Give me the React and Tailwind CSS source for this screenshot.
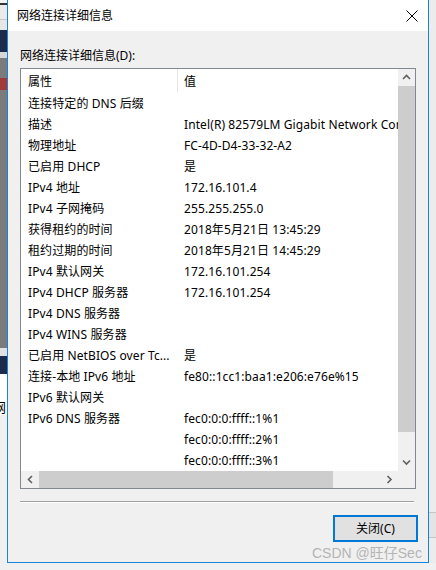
import React from "react";

const rows = [
  ["连接特定的 DNS 后缀", ""],
  ["描述", "Intel(R) 82579LM Gigabit Network Connection"],
  ["物理地址", "FC-4D-D4-33-32-A2"],
  ["已启用 DHCP", "是"],
  ["IPv4 地址", "172.16.101.4"],
  ["IPv4 子网掩码", "255.255.255.0"],
  ["获得租约的时间", "2018年5月21日 13:45:29"],
  ["租约过期的时间", "2018年5月21日 14:45:29"],
  ["IPv4 默认网关", "172.16.101.254"],
  ["IPv4 DHCP 服务器", "172.16.101.254"],
  ["IPv4 DNS 服务器", ""],
  ["IPv4 WINS 服务器", ""],
  ["已启用 NetBIOS over Tc...", "是"],
  ["连接-本地 IPv6 地址", "fe80::1cc1:baa1:e206:e76e%15"],
  ["IPv6 默认网关", ""],
  ["IPv6 DNS 服务器", "fec0:0:0:ffff::1%1"],
  ["", "fec0:0:0:ffff::2%1"],
  ["", "fec0:0:0:ffff::3%1"],
];

const font = { fontFamily: '"Noto Sans", "Noto Sans CJK SC", sans-serif' };

function Chevron({ dir }) {
  const pts = {
    up: "1,5 4.5,1.5 8,5",
    down: "1,1.5 4.5,5 8,1.5",
    left: "5,1 1.5,4.5 5,8",
    right: "1.5,1 5,4.5 1.5,8",
  }[dir];
  const vb = dir === "up" || dir === "down" ? "0 0 9 7" : "0 0 7 9";
  const w = dir === "up" || dir === "down" ? 9 : 7;
  const h = dir === "up" || dir === "down" ? 7 : 9;
  return (
    <svg width={w} height={h} viewBox={vb}>
      <polyline points={pts} fill="none" stroke="#606060" strokeWidth="1.6" />
    </svg>
  );
}

export default function App() {
  return (
    <div
      className="w-[436px] h-[570px] bg-[#f0f0f0] relative overflow-hidden text-[12px] text-black"
      style={font}
    >
      <div className="flex h-[563px]">
        {/* left background strip */}
        <div className="w-[7px] flex flex-col shrink-0">
          <div className="h-[3px] bg-[#f4f4f4]" />
          <div className="h-[2px] bg-[#333]" />
          <div className="h-[14px] bg-[#eaeaea]" />
          <div className="h-px bg-[#c8c8c8]" />
          <div className="h-[10px] bg-[#e6e6e6]" />
          <div className="h-[22px] bg-[#1d2b4d]" />
          <div className="h-[6px] bg-[#d6d6d6]" />
          <div className="h-[20px] bg-[#7b7b7b]" />
          <div className="h-[12px] bg-[#a33a3a]" />
          <div className="h-[258px] bg-[#7b7b7b]" />
          <div className="h-[8px] bg-[#e2e2e2]" />
          <div className="h-[18px] bg-[#1d2b4d]" />
          <div className="h-[25px] bg-white" />
          <div className="h-[16px] bg-white overflow-hidden leading-[16px] text-[13px]" style={{ fontFamily: '"Noto Sans CJK SC", sans-serif' }}>
            <span className="relative -left-[7px]">网</span>
          </div>
          <div className="flex-1 bg-[#f0f0f0]" />
        </div>

        {/* dialog */}
        <div className="w-[422px] shrink-0 border-x border-b border-[#1883d7] flex flex-col bg-[#f0f0f0]">
          <div className="h-[31px] bg-white flex items-center justify-between pl-[9px] pr-[9px]">
            <span>网络连接详细信息</span>
            <svg width="12" height="12" viewBox="0 0 12 12" className="mr-px">
              <line x1="0.5" y1="0.5" x2="11.5" y2="11.5" stroke="#000" strokeWidth="1" />
              <line x1="11.5" y1="0.5" x2="0.5" y2="11.5" stroke="#000" strokeWidth="1" />
            </svg>
          </div>

          <div className="flex flex-col pl-[12px] pt-[16px]">
            <div className="leading-[16px] h-[16px] pt-px">网络连接详细信息(D):</div>

            <div className="mt-[5px] w-[396px] h-[421px] border border-[#828790] bg-white flex flex-col">
              <div className="flex h-[402px]">
                <div className="w-[377px] overflow-hidden flex flex-col tracking-[0.1px]">
                  <div className="h-[23px] flex shrink-0">
                    <div className="w-[156px] pl-[7px] pt-[2px] flex items-center">属性</div>
                    <div className="w-px bg-[#e5e5e5]" />
                    <div className="pl-[6px] pt-[2px] flex items-center">值</div>
                  </div>
                  {rows.map(([k, v], i) => (
                    <div key={i} className="h-[21px] pt-[2px] flex items-center shrink-0 whitespace-nowrap">
                      <div className="w-[157px] pl-[7px] shrink-0">{k}</div>
                      <div className="pl-[6px]">{v}</div>
                    </div>
                  ))}
                </div>
                <div className="w-[17px] bg-[#f0f0f0] flex flex-col">
                  <div className="h-[17px] flex items-center justify-center">
                    <Chevron dir="up" />
                  </div>
                  <div className="h-[346px] bg-[#cdcdcd]" />
                  <div className="flex-1" />
                  <div className="h-[17px] flex items-center justify-center">
                    <Chevron dir="down" />
                  </div>
                </div>
              </div>
              <div className="flex h-[17px]">
                <div className="w-[377px] bg-[#f0f0f0] flex">
                  <div className="w-[18px] flex items-center justify-center">
                    <Chevron dir="left" />
                  </div>
                  <div className="w-[294px] bg-[#cdcdcd]" />
                  <div className="flex-1" />
                  <div className="w-[17px] flex items-center justify-center">
                    <Chevron dir="right" />
                  </div>
                </div>
                <div className="flex-1 bg-[#f0f0f0]" />
              </div>
            </div>

            <div className="mt-[12px] w-[394px] h-px bg-[#a0a0a0]" />
            <div className="h-px w-[394px] bg-white" />

            <div className="mt-[12px] flex justify-end pr-[10px]">
              <div className="w-[85px] h-[27px] border-2 border-[#0078d7] bg-[#e1e1e1] flex items-center justify-center">
                关闭(C)
              </div>
            </div>
          </div>
        </div>

        {/* right background strip */}
        <div className="w-[7px] flex flex-col shrink-0 bg-[#ececec]">
          <div className="h-[512px]" />
          <div className="h-px bg-[#c4c4c4]" />
          <div className="h-[24px] bg-[#e4e4e4]" />
          <div className="h-px bg-[#c4c4c4]" />
        </div>
      </div>

      <div
        className="absolute left-[312px] top-[544px] text-[14px] leading-[18px] text-[#b4b4b4] whitespace-nowrap"
        style={{ fontFamily: '"Liberation Sans", "Noto Sans CJK SC", sans-serif' }}
      >
        CSDN @旺仔Sec
      </div>
    </div>
  );
}
